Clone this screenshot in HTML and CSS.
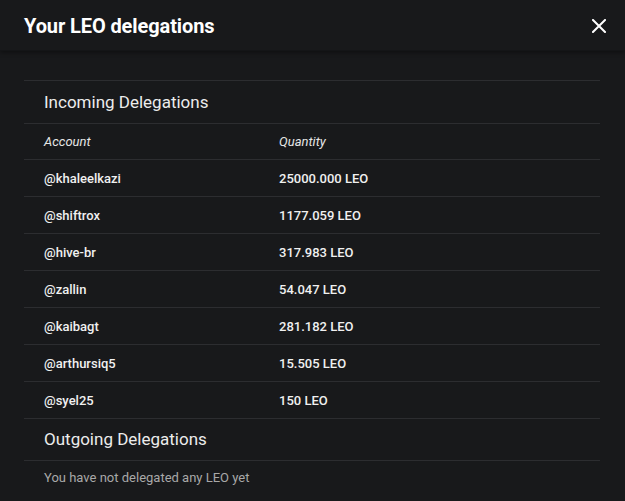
FILE: index.html
```html
<!DOCTYPE html>
<html>
<head>
<meta charset="utf-8">
<link rel="stylesheet" href="styles.css">
</head>
<body>
<div class="modal">
  <header class="modal-header">
    <h1 class="modal-title">Your LEO delegations</h1>
    <button class="close-btn" aria-label="Close">
      <svg width="14" height="14" viewBox="0 0 14 14"><path d="M1 1L13 13M13 1L1 13" stroke="#fff" stroke-width="2" stroke-linecap="square"/></svg>
    </button>
  </header>
  <div class="modal-body">
    <div class="section">
      <div class="section-title">Incoming Delegations</div>
      <table class="deleg-table">
        <thead>
          <tr><th class="col-account">Account</th><th>Quantity</th></tr>
        </thead>
        <tbody>
          <tr><td>@khaleelkazi</td><td>25000.000 LEO</td></tr>
          <tr><td>@shiftrox</td><td>1177.059 LEO</td></tr>
          <tr><td>@hive-br</td><td>317.983 LEO</td></tr>
          <tr><td>@zallin</td><td>54.047 LEO</td></tr>
          <tr><td>@kaibagt</td><td>281.182 LEO</td></tr>
          <tr><td>@arthursiq5</td><td>15.505 LEO</td></tr>
          <tr><td>@syel25</td><td>150 LEO</td></tr>
        </tbody>
      </table>
      <div class="section-title outgoing">Outgoing Delegations</div>
      <div class="empty">You have not delegated any LEO yet</div>
    </div>
  </div>
</div>
</body>
</html>
```
FILE: styles.css
```css
html, body {
  margin: 0;
  padding: 0;
  background: #18191b;
  font-family: Roboto, "Liberation Sans", sans-serif;
  color: #ffffff;
}
.modal {
  width: 625px;
  height: 501px;
  background: #18191b;
  overflow: hidden;
}
.modal-header {
  height: 50px;
  display: flex;
  align-items: center;
  justify-content: space-between;
  padding: 0 18px 0 24px;
  box-shadow: 0 2px 4px rgba(0,0,0,0.35);
  position: relative;
  border-bottom: 1px solid #141517;
}
.modal-title {
  margin: 0;
  font-size: 20px;
  font-weight: 700;
  letter-spacing: -0.1px;
  padding-top: 1px;
}
.close-btn {
  background: none;
  border: 0;
  padding: 0;
  width: 16px;
  height: 16px;
  display: flex;
  align-items: center;
  justify-content: center;
  cursor: pointer;
  margin-top: 1px;
}
.modal-body {
  padding: 29px 25px 0 24px;
}
.section {
  border-top: 1px solid #2c2d30;
}
.section-title {
  font-size: 17px;
  font-weight: 400;
  color: #ececec;
  height: 42px;
  line-height: 42px;
  padding-left: 20px;
  border-bottom: 1px solid #2c2d30;
}
.section-title.outgoing {
  height: 41px;
  line-height: 41px;
}
.deleg-table {
  width: 100%;
  border-collapse: collapse;
  font-size: 13px;
}
.deleg-table th {
  font-style: italic;
  font-weight: 400;
  text-align: left;
  color: #e6e6e6;
  height: 35px;
  padding: 0 0 0 20px;
  border-bottom: 1px solid #2c2d30;
}
.deleg-table .col-account {
  width: 215px;
}
.deleg-table td {
  height: 36px;
  padding: 0 0 0 20px;
  border-bottom: 1px solid #2c2d30;
  color: #f0f0f0;
  font-weight: 500;
}
.empty {
  font-size: 13px;
  color: #a8a8a8;
  padding: 9px 0 0 20px;
}
```
